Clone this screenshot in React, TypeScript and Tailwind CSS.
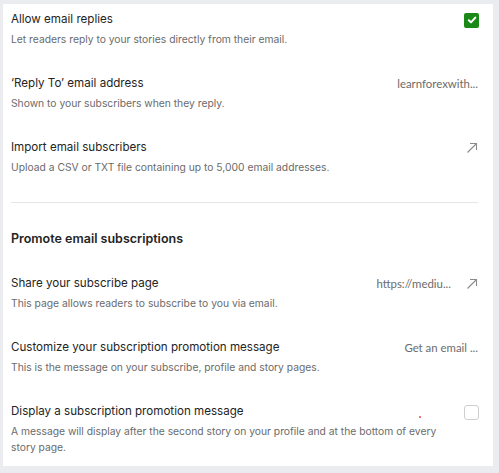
import React from "react";

const sans = { fontFamily: "Inter, 'Noto Sans', sans-serif" };

function ArrowOut() {
  return (
    <svg width="12" height="12" viewBox="0 0 12 12" fill="none" stroke="#8a8a8a" strokeWidth="1.1">
      <path d="M1.5 10.5 L10.5 1.5" />
      <path d="M4 1.5 H10.5 V8" />
    </svg>
  );
}

type Row = {
  title: string;
  desc: string;
  value?: string;
  arrow?: boolean;
  check?: "on" | "off";
};

function SettingRow({ row }: { row: Row }) {
  return (
    <div className="relative">
      <div className="flex items-center justify-between h-5">
        <span className="text-[11.6px] text-[#242424]">{row.title}</span>
        <div className="flex items-center gap-[15px]">
          {row.value && (
            <span className="text-[11.4px] text-[#6b6b6b]" style={{ fontFamily: "Lato, sans-serif" }}>
              {row.value}
            </span>
          )}
          {row.arrow && <ArrowOut />}
          {row.check === "on" && (
            <span className="w-[15px] h-[15px] rounded-[2px] bg-[#1a8917] flex items-center justify-center mr-[-1px]">
              <svg width="10" height="10" viewBox="0 0 10 10" fill="none" stroke="#fff" strokeWidth="2" strokeLinecap="round" strokeLinejoin="round">
                <path d="M1.8 5.2 L4 7.4 L8.3 2.6" />
              </svg>
            </span>
          )}
          {row.check === "off" && (
            <span className="w-[15px] h-[15px] rounded-[3px] border border-[#cfcfcf] bg-white mr-[-1px]" />
          )}
        </div>
      </div>
      <p className="mt-[1px] text-[10.3px] leading-4 text-[#6b6b6b] pr-6">{row.desc}</p>
      {row.check === "off" && (
        <span className="absolute left-[408px] top-[14px] w-[2px] h-[2px] rounded-full bg-[#e8484a]" />
      )}
    </div>
  );
}

const top: Row[] = [
  { title: "Allow email replies", desc: "Let readers reply to your stories directly from their email.", check: "on" },
  { title: "‘Reply To’ email address", desc: "Shown to your subscribers when they reply.", value: "learnforexwith..." },
  { title: "Import email subscribers", desc: "Upload a CSV or TXT file containing up to 5,000 email addresses.", arrow: true },
];

const promo: Row[] = [
  { title: "Share your subscribe page", desc: "This page allows readers to subscribe to you via email.", value: "https://mediu...", arrow: true },
  { title: "Customize your subscription promotion message", desc: "This is the message on your subscribe, profile and story pages.", value: "Get an email ..." },
  {
    title: "Display a subscription promotion message",
    desc: "A message will display after the second story on your profile and at the bottom of every story page.",
    check: "off",
  },
];

export default function App() {
  return (
    <div className="w-[499px] h-[473px] bg-[#ebecf0] pt-1 pl-[3px] pr-[6px]" style={sans}>
      <div className="bg-white pl-2 pr-[15px] pt-[6px] pb-[11px] flex flex-col">
        <div className="flex flex-col gap-[27px]">
          {top.map((r) => (
            <SettingRow key={r.title} row={r} />
          ))}
        </div>
        <div className="mt-[27px] h-px bg-[#e6e6e6]" />
        <h2 className="mt-[26px] h-5 flex items-center text-[12.5px] font-semibold text-[#242424]">
          Promote email subscriptions
        </h2>
        <div className="mt-[25px] flex flex-col gap-[27px]">
          {promo.map((r) => (
            <SettingRow key={r.title} row={r} />
          ))}
        </div>
      </div>
    </div>
  );
}
